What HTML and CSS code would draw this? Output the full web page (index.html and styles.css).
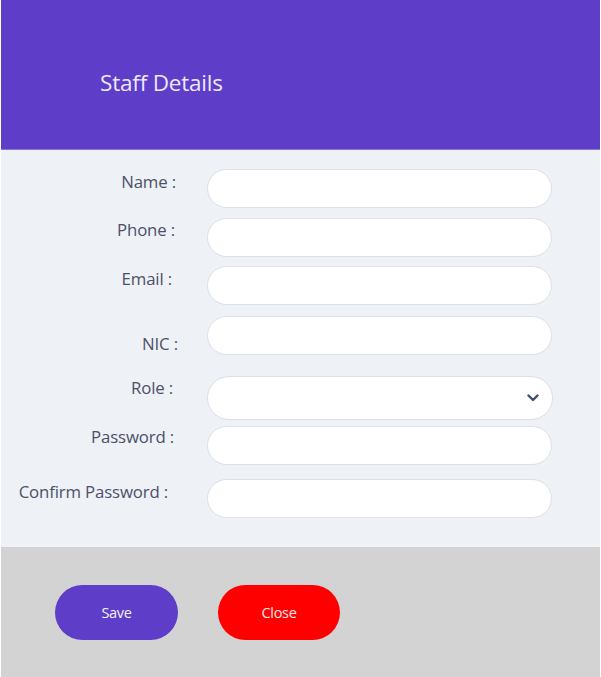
FILE: index.html
```html
<!DOCTYPE html>
<html>
<head>
<meta charset="utf-8">
<link rel="stylesheet" href="styles.css">
</head>
<body>
<div class="modal">
  <header class="modal-header">
    <h1 class="title">Staff Details</h1>
  </header>
  <form class="modal-body">
    <div class="row r1"><label class="lbl">Name :</label><input class="field" type="text"></div>
    <div class="row r2"><label class="lbl lbl-phone">Phone :</label><input class="field" type="text"></div>
    <div class="row r3"><label class="lbl lbl-email">Email :</label><input class="field" type="text"></div>
    <div class="row r4"><label class="lbl lbl-nic">NIC :</label><input class="field" type="text"></div>
    <div class="row r5"><label class="lbl lbl-role">Role :</label>
      <div class="select-wrap">
        <select class="field select"><option></option></select>
        <svg class="chev" width="12" height="8" viewBox="0 0 12 8"><path d="M1.5 1.5 L6 6 L10.5 1.5" fill="none" stroke="#3f4f6a" stroke-width="2.4" stroke-linecap="round" stroke-linejoin="round"/></svg>
      </div>
    </div>
    <div class="row r6"><label class="lbl lbl-pw">Password :</label><input class="field" type="password"></div>
    <div class="row r7"><label class="lbl lbl-cpw">Confirm Password :</label><input class="field" type="password"></div>
  </form>
  <footer class="modal-footer">
    <button class="btn btn-save" type="button">Save</button>
    <button class="btn btn-close" type="button">Close</button>
  </footer>
</div>
</body>
</html>
```

FILE: styles.css
```css
html, body {
  margin: 0;
  padding: 0;
  background: #ffffff;
}
body {
  font-family: "Open Sans", "Noto Sans", Arial, sans-serif;
}
.modal {
  margin-left: 1px;
  width: 599px;
  height: 677px;
  display: flex;
  flex-direction: column;
}
.modal-header {
  background: #5e3dc9;
  height: 150px;
  flex: none;
  display: flex;
  align-items: center;
  padding-left: 99px;
  box-sizing: border-box;
  border-bottom: 1px solid #8a74da;
}
.title {
  margin: 0;
  color: #ece8fb;
  font-weight: 400;
  font-size: 22.5px;
  letter-spacing: -0.2px;
  padding-top: 16px;
}
.modal-body {
  margin: 0;
  background: #eef1f6;
  height: 397px;
  flex: none;
  box-sizing: border-box;
  padding-top: 19px;
  display: flex;
  flex-direction: column;
}
.row {
  display: flex;
  align-items: flex-start;
}
.r2 { margin-top: 10px; }
.r3 { margin-top: 9px; }
.r4 { margin-top: 11px; }
.r5 { margin-top: 21px; }
.r6 { margin-top: 6px; }
.r7 { margin-top: 14px; }
.lbl {
  width: 175px;
  box-sizing: border-box;
  text-align: right;
  color: #4c5068;
  font-size: 16.8px;
  line-height: 22px;
  padding-top: 2px;
  letter-spacing: -0.15px;
  flex: none;
}
.lbl-phone { padding-top: 1px; padding-right: 1px; }
.lbl-email { padding-right: 4px; padding-top: 2px; }
.lbl-nic { padding-top: 17px; padding-right: 0; width: 177px; }
.lbl-role { padding-right: 3px; padding-top: 1px; }
.lbl-pw { padding-right: 2px; padding-top: 0; }
.lbl-cpw { padding-right: 8px; padding-top: 2px; }
.lbl-nic + .field { margin-left: 29px; }
.field {
  margin-left: 31px;
  width: 345px;
  height: 39px;
  box-sizing: border-box;
  background: #ffffff;
  border: 1px solid #dcdfe6;
  border-radius: 20px;
  outline: none;
  padding: 0 16px;
  font-family: inherit;
}
.select-wrap {
  position: relative;
  margin-left: 31px;
}
.select {
  margin-left: 0;
  height: 44px;
  width: 346px;
  border-radius: 22px;
  appearance: none;
  -webkit-appearance: none;
}
.chev {
  position: absolute;
  right: 14px;
  top: 18px;
}
.modal-footer {
  flex: 1;
  background: #d3d3d3;
  display: flex;
  align-items: flex-start;
  padding: 38px 0 0 54px;
  gap: 40px;
}
.btn {
  width: 123px;
  height: 55px;
  border: none;
  border-radius: 28px;
  color: #f4f2fc;
  font-family: "Open Sans", "Noto Sans", Arial, sans-serif;
  font-size: 14.5px;
  letter-spacing: -0.3px;
  cursor: pointer;
}
.btn-save { background: #5e3dc9; }
.btn-close { background: #ff0000; width: 122px; color: #ffeaea; }
```
